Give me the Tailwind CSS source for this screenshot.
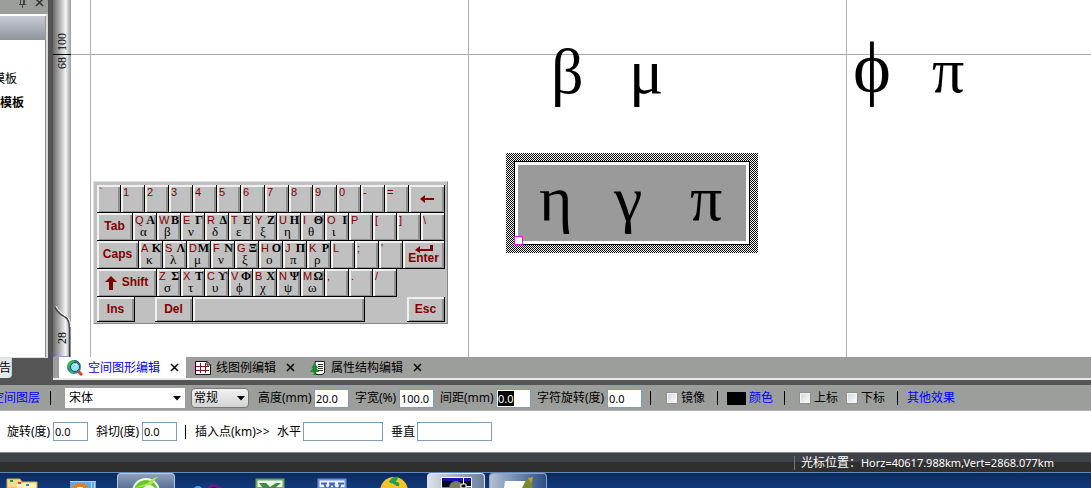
<!DOCTYPE html>
<html lang="zh-CN">
<head>
<meta charset="utf-8">
<title>空间图形编辑</title>
<script src="https://cdn.jsdelivr.net/npm/@tailwindcss/browser@4"></script>
</head>
<body class="flex h-screen flex-col overflow-hidden bg-white font-['Noto_Sans','Noto_Sans_CJK_SC',sans-serif] text-[12px] leading-4 text-black">

<!-- Workspace -->
<main class="flex min-h-0 flex-1 bg-[#555]">
  <aside class="flex w-[48px] shrink-0 flex-col overflow-hidden">
    <div class="flex h-[14px] shrink-0 items-start justify-end gap-2 bg-[#9c9e9b] pr-1">
      <button aria-label="固定" class="h-2"><svg width="9" height="8" viewBox="0 0 9 8" fill="none" stroke="#444"><path d="M2.5 0V4M5.500 0V4M6.500 0V4M1 4.500H8M4.500 5V8"/></svg></button>
      <button aria-label="关闭面板" class="h-2"><svg width="9" height="8" viewBox="0 0 9 8" stroke="#333" stroke-width="1.500"><path d="M1 -1L8 6M8 -1L1 6"/></svg></button>
    </div>
    <div class="flex min-h-0 flex-1 flex-col border-r-2 border-[#d8d8d8] bg-white">
      <div class="mt-[2px] h-[24px] shrink-0 border-r border-[#999] bg-linear-to-b from-[#c9ccd4] to-[#8f949c]"></div>
      <div class="flex flex-1 flex-col gap-2 border-r border-[#888] pt-[31px]">
        <p class="flex w-[17px] justify-end whitespace-nowrap">模板</p>
        <p class="flex w-[24px] justify-end whitespace-nowrap font-bold">模板</p>
      </div>
    </div>
    <div class="h-[23px] shrink-0 border-t border-[#ddd] bg-[#555]">
      <a href="#" class="flex h-[20px] w-[12px] items-center justify-end rounded-br-sm border-r border-[#b8d8e0] bg-[#e4e8ea]">告</a>
    </div>
  </aside>

  <section class="ml-[5px] flex min-w-0 flex-1 flex-col">
    <div class="flex min-h-0 flex-1">
      <!-- Ruler -->
      <div class="relative w-[18px] shrink-0 bg-linear-to-r from-[#6a6a6a] via-[#f4f4f4] via-70% to-[#9c9c9c] font-['Liberation_Serif',serif] text-[12px] leading-3">
        <span class="absolute top-[33px] left-[3px] rotate-180 [writing-mode:vertical-rl]">100</span>
        <span class="absolute top-[54px] left-0 h-px w-full bg-black"></span>
        <span class="absolute top-[57px] left-[3px] rotate-180 [writing-mode:vertical-rl]">68</span>
        <svg class="absolute bottom-0 left-0" width="18" height="52" viewBox="0 0 18 52" fill="none"><path d="M2 2C5 9 9 10 12 12C16 14 16.500 18 16.500 23V52" stroke="#444" stroke-width="1.500"/><path d="M3 1C6 7 10 9 13 11C16 13 17.500 16 17.500 22" stroke="#fff"/><path d="M2 51.500H16" stroke="#8b9fd0"/></svg>
        <span class="absolute bottom-[13px] left-[3px] rotate-180 [writing-mode:vertical-rl]">28</span>
      </div>

      <!-- Drawing canvas: free placement -->
      <div class="relative min-w-0 flex-1 overflow-hidden bg-white font-['Liberation_Serif',serif]">
        <div class="absolute top-[54px] left-0 h-px w-full bg-[#aaa]"></div>
        <div class="absolute top-0 left-[19px] h-full w-px bg-[#b0b0b0]"></div>
        <div class="absolute top-0 left-[397px] h-full w-px bg-[#b0b0b0]"></div>
        <div class="absolute top-0 left-[775px] h-full w-px bg-[#b0b0b0]"></div>

        <span class="absolute top-[36px] left-[480px] text-[64px] leading-[72px]">β</span>
        <span class="absolute top-[36px] left-[558px] text-[64px] leading-[72px]">μ</span>
        <span class="absolute top-[32px] left-[782px] text-[72px] leading-[72px]">ϕ</span>
        <span class="absolute top-[35px] left-[861px] text-[64px] leading-[72px]">π</span>

        <div class="absolute top-[153px] left-[435px] h-[100px] w-[252px] bg-[repeating-conic-gradient(#000_0_25%,#fff_0_50%)] bg-size-[2px_2px] p-[8px]">
          <div class="h-full border border-black bg-[#9a9a9a] shadow-[inset_0_0_0_3px_#fff]"></div>
        </div>
        <span class="absolute top-[163px] left-[468px] text-[64px] leading-[72px]">η</span>
        <span class="absolute top-[163px] left-[543px] text-[64px] leading-[72px]">γ</span>
        <span class="absolute top-[163px] left-[619px] text-[64px] leading-[72px]">π</span>
        <span class="absolute top-[236px] left-[443px] size-[9px] border border-[#f0f] bg-white"></span>

        <!-- Greek keyboard -->
        <div id="kb" class="absolute top-[181px] left-[22px] flex w-[355px] flex-col border border-t-[#ddd] border-r-[#888] border-b-[#888] border-l-[#ddd] bg-[#c0c0c0] pt-[3px] pb-px pl-[3px]"></div>
      </div>
    </div>

    <!-- Document tabs -->
    <nav class="flex h-[23px] shrink-0 items-stretch border-b-2 border-[#e8e8e8] bg-[#9c9e9b]">
      <div class="ml-[6px] flex w-[127px] shrink-0 items-center bg-white pl-[7px]">
        <svg width="18" height="18" viewBox="0 0 18 18"><circle cx="8" cy="8" r="7" fill="#2f8f8f"/><path d="M1 8C2 2 6 1 9 1L8 4L4 6L3 9Z" fill="#3bb54a"/><path d="M3 12L7 11L8 15C6 15 4 14 3 12ZM12 2L15 7L14 10L11 5Z" fill="#3bb54a"/><path d="M8 1.500A6.500 6.500 0 0 1 14 6" fill="none" stroke="#2858b0"/><circle cx="9" cy="8" r="4.500" fill="#8fe6f2" stroke="#1c4c70"/><path d="M7 7C8 5 9 5 11 6" fill="none" stroke="#fff"/><path d="M12 12L16 16" stroke="#d9442e" stroke-width="3"/></svg>
        <a href="#" class="ml-1 text-[#00f]">空间图形编辑</a>
        <button aria-label="关闭空间图形编辑" class="ml-[10px]"><svg width="9" height="9" viewBox="0 0 9 9" stroke="#000" stroke-width="1.500"><path d="M1 1L8 8M8 1L1 8"/></svg></button>
      </div>
      <div class="flex items-center pl-[9px]">
        <svg width="16" height="16" viewBox="0 0 16 16" fill="none"><path d="M.5 1.500H12L15.500 5V14.500H.5Z" fill="#fff" stroke="#111"/><path d="M12 1.500V5H15.500" stroke="#111"/><path d="M5.500 3V13M10.500 3V13M1 6.500H14M1 10.500H14" stroke="#801818"/></svg>
        <a href="#" class="ml-[5px]">线图例编辑</a>
        <button aria-label="关闭线图例编辑" class="ml-[10px]"><svg width="9" height="9" viewBox="0 0 9 9" stroke="#000" stroke-width="1.500"><path d="M1 1L8 8M8 1L1 8"/></svg></button>
      </div>
      <div class="flex items-center pl-[15px]">
        <svg width="16" height="16" viewBox="0 0 16 16"><path d="M5 1.500H14.500V13L12 14.500H6Z" fill="#fff" stroke="#222"/><path d="M8 4.500H13M8 6.500H13M8 8.500H13M8 10.500H13" stroke="#333"/><path d="M4.500 3L8 8H6.500L9 12H6V15H3.500V12H0L3 8H1.500Z" fill="#158a28"/></svg>
        <a href="#" class="ml-[5px]">属性结构编辑</a>
        <button aria-label="关闭属性结构编辑" class="ml-[10px]"><svg width="9" height="9" viewBox="0 0 9 9" stroke="#000" stroke-width="1.500"><path d="M1 1L8 8M8 1L1 8"/></svg></button>
      </div>
    </nav>
  </section>
</main>

<!-- Text properties, first row -->
<form class="flex h-[31px] shrink-0 items-center overflow-hidden border-t-5 border-b border-t-[#555] border-b-[#b4b4b4] bg-[#9c9e9b] pt-px whitespace-nowrap">
  <a href="#" class="-ml-[8px] w-[48px] shrink-0 text-[#00f]">空间图层</a>
  <i class="ml-[10px] h-[14px] w-px shrink-0 bg-black"></i>
  <div class="relative ml-[14px] h-[20px] w-[120px] shrink-0">
    <select aria-label="字体" class="size-full appearance-none bg-white pl-1"><option>宋体</option></select>
    <svg class="pointer-events-none absolute top-2 right-1" width="8" height="5" viewBox="0 0 8 5"><path d="M0 0H8L4 4.500Z"/></svg>
  </div>
  <div class="relative ml-[6px] h-[20px] w-[58px] shrink-0">
    <select aria-label="样式" class="size-full appearance-none rounded-sm border border-[#777] bg-linear-to-b from-[#f2f2f2] to-[#d4d4d4] pl-[2px]"><option>常规</option></select>
    <svg class="pointer-events-none absolute top-2 right-1" width="8" height="5" viewBox="0 0 8 5"><path d="M0 0H8L4 4.500Z"/></svg>
  </div>
  <label for="h" class="ml-[9px] w-[56px] shrink-0">高度(mm)</label>
  <input id="h" value="20.0" class="h-[19px] w-[35px] shrink-0 border border-[#7f9db9] bg-white pl-px text-[11px]">
  <label for="w" class="ml-[6px] w-[44px] shrink-0">字宽(%)</label>
  <input id="w" value="100.0" class="h-[19px] w-[35px] shrink-0 border border-[#7f9db9] bg-white pl-px text-[11px]">
  <label for="s" class="ml-[6px] w-[56px] shrink-0">间距(mm)</label>
  <input id="s" value="0.0" autofocus class="h-[19px] w-[35px] shrink-0 border border-[#7f9db9] bg-white pl-px text-[11px] outline-none selection:bg-black selection:text-white">
  <label for="r" class="ml-[6px] w-[70px] shrink-0">字符旋转(度)</label>
  <input id="r" value="0.0" class="h-[19px] w-[35px] shrink-0 border border-[#7f9db9] bg-white pl-px text-[11px]">
  <i class="ml-[8px] h-[14px] w-px shrink-0 bg-black"></i>
  <label class="ml-[15px] flex shrink-0 items-center gap-[3px]"><input type="checkbox" class="size-[12px] appearance-none border border-[#8e8f8f] bg-linear-to-br from-[#cfd3da] to-white shadow-[inset_0_0_0_1px_#f4f4f4]">镜像</label>
  <i class="ml-[12px] h-[14px] w-px shrink-0 bg-black"></i>
  <i class="ml-[9px] h-[13px] w-[19px] shrink-0 bg-black"></i>
  <a href="#" class="ml-[3px] shrink-0 text-[#00f]">颜色</a>
  <i class="ml-[11px] h-[14px] w-px shrink-0 bg-black"></i>
  <label class="ml-[14px] flex shrink-0 items-center gap-[3px]"><input type="checkbox" class="size-[12px] appearance-none border border-[#8e8f8f] bg-linear-to-br from-[#cfd3da] to-white shadow-[inset_0_0_0_1px_#f4f4f4]">上标</label>
  <label class="ml-[8px] flex shrink-0 items-center gap-[3px]"><input type="checkbox" class="size-[12px] appearance-none border border-[#8e8f8f] bg-linear-to-br from-[#cfd3da] to-white shadow-[inset_0_0_0_1px_#f4f4f4]">下标</label>
  <i class="ml-[12px] h-[14px] w-px shrink-0 bg-black"></i>
  <a href="#" class="ml-[9px] shrink-0 text-[#00f]">其他效果</a>
</form>

<!-- Text properties, second row -->
<form class="flex h-[41px] shrink-0 items-center bg-white pl-[7px] whitespace-nowrap">
  <label for="a" class="w-[46px] shrink-0">旋转(度)</label>
  <input id="a" value="0.0" class="h-[19px] w-[35px] shrink-0 border border-[#7f9db9] pl-px text-[11px]">
  <label for="b" class="ml-[8px] w-[46px] shrink-0">斜切(度)</label>
  <input id="b" value="0.0" class="h-[19px] w-[35px] shrink-0 border border-[#7f9db9] pl-px text-[11px]">
  <i class="ml-[8px] h-[14px] w-px shrink-0 bg-black"></i>
  <span class="ml-[9px] w-[82px] shrink-0">插入点(km)&gt;&gt;</span>
  <label for="x" class="w-[26px] shrink-0">水平</label>
  <input id="x" class="h-[19px] w-[80px] shrink-0 border border-[#7f9db9] px-1">
  <label for="y" class="ml-[8px] w-[26px] shrink-0">垂直</label>
  <input id="y" class="h-[19px] w-[75px] shrink-0 border border-[#7f9db9] px-1">
</form>

<!-- Status bar -->
<footer class="flex h-[20px] shrink-0 items-center justify-end border-t border-[#888] bg-linear-to-b from-[#40424a] from-45% to-[#2f2f2d] to-50% pt-px pr-[37px] text-white">
  <p class="border-l border-[#777] pl-[6px] leading-[14px]">光标位置：<span class="text-[11px]">Horz=40617.988km,Vert=2868.077km</span></p>
</footer>

<!-- Taskbar -->
<nav class="flex h-[16px] shrink-0 gap-1 overflow-hidden border-t border-[#6088b8] bg-linear-to-b from-[#0b2a60] to-[#113a7a]">
  <button aria-label="资源管理器" class="-ml-[7px] h-[15px] w-[58px] shrink-0"><svg width="58" height="15" viewBox="0 0 58 15"><path d="M14 8V6H27L29 9H44V15H14Z" fill="#f3dc92" stroke="#d0ac50"/><path d="M24 10H43V15H24Z" fill="#fff0b8"/><path d="M17 7H20V9H17Z" fill="#1a9a28"/><path d="M25 9H28V11H25Z" fill="#d63030"/><path d="M33 11H36V13H33Z" fill="#2784d8"/></svg></button>
  <button aria-label="媒体播放器" class="h-[15px] w-[58px] shrink-0"><svg width="58" height="15" viewBox="0 0 58 15"><path d="M15 8H41V15H15Z" fill="#66a8dc"/><path d="M15 8.500H41M36.500 8V15M39.500 8V15" stroke="#a8d4f4"/><circle cx="25" cy="18" r="8" fill="#ee7a20"/><path d="M22 14H28V15H22Z" fill="#fff"/></svg></button>
  <button aria-label="浏览器" class="h-[15px] w-[58px] shrink-0 rounded-t-sm border border-b-0 border-[#b8c8dc] bg-linear-to-b from-[#8e9fba] to-[#5a7298]"><svg width="56" height="14" viewBox="0 0 56 14"><circle cx="28" cy="18" r="14" fill="#f2f8e8"/><circle cx="28" cy="18" r="12" fill="#6ac52c"/><path d="M17 14C24 10 29 11 32 7C34 4 38 3 41 3C36 5 36 8 33 11" fill="#a6e858"/><path d="M25 14C29 10 33 10 37 14" fill="#f2f8e8"/></svg></button>
  <button aria-label="聊天" class="h-[15px] w-[58px] shrink-0"><svg width="58" height="15" viewBox="0 0 58 15"><circle cx="19" cy="18" r="5" fill="#4a9cdc"/><circle cx="35" cy="19" r="8" fill="#611c80"/><circle cx="35" cy="19" r="5" fill="#39125c"/></svg></button>
  <button aria-label="Excel" class="h-[15px] w-[58px] shrink-0"><svg width="58" height="15" viewBox="0 0 58 15"><path d="M15.500 6.500H42.500V15H15.500Z" fill="#edf6ea" stroke="#6ba862" stroke-width="2"/><path d="M18 10H25L29 14L35 10H40L34 15H22Z" fill="#3f8b43"/></svg></button>
  <button aria-label="Word" class="h-[15px] w-[58px] shrink-0"><svg width="58" height="15" viewBox="0 0 58 15"><path d="M15.500 6.500H42.500V15H15.500Z" fill="#edf2ff" stroke="#6a93dc" stroke-width="2"/><path d="M18 10.500H24M26 10.500H32M35 10.500H41M21 10L23 15M29 10L26 15M29 10L32 15M38 10L36 15" fill="none" stroke="#4268bc" stroke-width="2"/></svg></button>
  <button aria-label="地图" class="h-[15px] w-[58px] shrink-0"><svg width="58" height="15" viewBox="0 0 58 15"><circle cx="29" cy="18" r="14" fill="#f5c32c"/><path d="M24 9C26 4 31 3 34 4C33 6 31 7 31 9C34 9 35 11 34 13H31C31 11 27 11 24 9Z" fill="#20a052"/></svg></button>
  <button aria-label="绘图" class="h-[15px] w-[58px] shrink-0 rounded-t-sm border border-b-0 border-[#e0e8f4] bg-linear-to-r from-[#dce2ea] to-[#6a7e9e]"><svg width="56" height="14" viewBox="0 0 56 14"><path d="M13.500 3.500H43.500V14H13.500Z" fill="#080820" stroke="#fff"/><path d="M15 4H43V7H15Z" fill="#1414b0"/><circle cx="28" cy="14" r="7" fill="#777b6e"/><path d="M35.500 4V10M38 12.500H43" stroke="#fff"/><path d="M33 10H38V14H33Z" fill="#111" stroke="#fff"/></svg></button>
  <button aria-label="编辑器" class="h-[15px] w-[58px] shrink-0 rounded-t-sm border border-b-0 border-[#8ca4c8] bg-linear-to-r from-[#b4c0d2] to-[#2c4f88]"><svg width="56" height="14" viewBox="0 0 56 14"><path d="M15 7H38L36 14H14Z" fill="#fff"/><path d="M32 14L36 6L43 3L42 14Z" fill="#768a34"/><path d="M38 4L43 3L41 9Z" fill="#b8a040"/></svg></button>
</nav>

<template id="key"><button class="relative h-full w-[24px] shrink-0 border-r border-b border-black bg-[#c0c0c0] text-left shadow-[inset_2px_2px_0_#f0f0f0,inset_-2px_-1px_0_#909090]"><span class="absolute top-[2px] left-[2px] font-['Liberation_Sans',sans-serif] text-[11px] leading-[10px] text-[#800000]"></span><span class="absolute top-[2px] right-px text-[12px] leading-[11px] font-bold"></span><span class="absolute top-[13px] left-[7px] text-[13px] leading-[12px]"></span></button></template>
<template id="wide"><button class="flex h-full shrink-0 flex-col items-center justify-center border-r border-b border-black bg-[#c0c0c0] font-['Liberation_Sans',sans-serif] text-[12px] leading-[11px] font-bold text-[#800000] shadow-[inset_2px_2px_0_#f0f0f0,inset_-2px_-1px_0_#909090]"></button></template>

<script>
const back = '<svg width="14" height="8" viewBox="0 0 14 8"><path d="M0 4L5 0V3H14V5H5V8Z" fill="#800000"/></svg>';
const enter = '<svg width="18" height="8" viewBox="0 0 18 8"><path d="M0 5L5 1V4H15V0H18V6H5V8Z" fill="#800000"/></svg><span>Enter</span>';
const shift = '<span class="flex items-center gap-[5px]"><svg width="12" height="14" viewBox="0 0 12 14"><path d="M6 0L12 6H8V14H4V6H0Z" fill="#800000"/></svg>Shift</span>';
const rows = [
  ['`','1','2','3','4','5','6','7','8','9','0','-','=',[36,back]],
  [[36,'Tab'],'QΑα','WΒβ','EΓν','RΔδ','TΕε','YΖξ','UΗη','IΘθ','OΙι','P','[',']','\\'],
  [[42,'Caps'],'AΚκ','SΛλ','DΜμ','FΝν','GΞξ','HΟο','JΠπ','KΡρ','L',';',"'",[42,enter]],
  [[60,shift],'ZΣσ','XΤτ','Cϒυ','VΦϕ','BΧχ','NΨψ','MΩω',',','.','/'],
  [[38,'Ins'],20,[38,'Del'],[172,''],42,[38,'Esc']]
];
const kb = document.getElementById('kb');
rows.forEach((row, n) => {
  const line = document.createElement('div');
  line.className = n === 4 ? 'flex h-[25px]' : 'flex h-[28px]';
  row.forEach(k => {
    if (typeof k === 'number') {
      const gap = document.createElement('i');
      gap.style.width = k + 'px';
      line.append(gap);
    } else if (Array.isArray(k)) {
      const b = document.getElementById('wide').content.firstElementChild.cloneNode(true);
      b.style.width = k[0] + 'px';
      b.innerHTML = k[1];
      if (!k[1]) b.setAttribute('aria-label', '空格');
      line.append(b);
    } else {
      const b = document.getElementById('key').content.firstElementChild.cloneNode(true);
      [...b.children].forEach((s, i) => { if (k[i]) s.textContent = k[i]; else s.remove(); });
      line.append(b);
    }
  });
  kb.append(line);
});
const spacing = document.getElementById('s');
spacing.focus();
spacing.select();
</script>
</body>
</html>
